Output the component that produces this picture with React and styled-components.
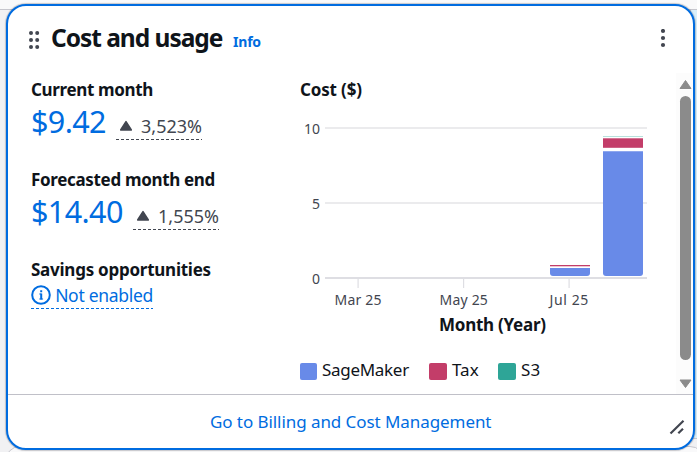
import React from "react";
import styled, { createGlobalStyle } from "styled-components";

const Global = createGlobalStyle`
  *, *::before, *::after { box-sizing: border-box; }
  body {
    margin: 0;
    background: #f3f3f5;
    font-family: "Noto Sans", "Open Sans", sans-serif;
    color: #0f141a;
    overflow: hidden;
  }
`;

const Page = styled.div`
  height: 452px;
  padding: 4px 2px 3px 6px;
  position: relative;
  overflow: hidden;
  background: linear-gradient(#f9f9fa 0 9px, #c6c6cd 9px 10px, #f1f1f3 10px);
`;

const Neighbor = styled.div`
  position: absolute;
  border: 1px solid #c6c6cd;
  left: ${(p) => p.$x}px;
  top: ${(p) => p.$y}px;
  width: ${(p) => p.$w}px;
  height: ${(p) => p.$h}px;
  border-radius: ${(p) => p.$r || 0}px;
  background: ${(p) => p.$bg};
`;

const Card = styled.section`
  position: relative;
  height: 446px;
  border: 2px solid #006ce0;
  border-radius: 20px;
  background: #fff;
  box-shadow: 0 0 1px 1px rgba(0, 7, 22, 0.2);
  display: flex;
  flex-direction: column;
  overflow: hidden;
`;

const Header = styled.header`
  height: 67px;
  flex: none;
  display: flex;
  align-items: flex-start;
  padding: 0 25px 0 20px;
`;

const HeaderIcon = styled.svg`
  display: block;
  flex: none;
  margin-top: 23px;
  fill: #424650;
`;

const Label = styled.span`
  display: block;
  white-space: nowrap;
  font-size: ${(p) => p.$size || 17}px;
  line-height: ${(p) => p.$lh || 20}px;
  font-weight: ${(p) => (p.$bold ? 700 : 400)};
  letter-spacing: ${(p) => p.$ls || 0}px;
  color: ${(p) => p.$color || "#0f141a"};
`;

const Title = styled.h2`
  width: 170px;
  margin: 15px 0 0 11px;
  font-size: 24.5px;
  line-height: 34px;
  letter-spacing: -1.03px;
  white-space: nowrap;
`;

const Info = styled.a`
  margin: 26px auto 0 12px;
  font-size: 14px;
  line-height: 20px;
  font-weight: 700;
  color: #006ce0;
  letter-spacing: -0.2px;
`;

const Body = styled.div`
  height: 321px;
  flex: none;
  display: grid;
  grid-template-columns: 269px 1fr 17px;
  padding-left: 23px;
`;

const Metrics = styled.div`
  padding-top: 5px;
`;

const Metric = styled.div`
  height: 90px;
`;

const ValueRow = styled.div`
  display: flex;
  align-items: flex-start;
`;

const Value = styled.div`
  width: ${(p) => p.$w}px;
`;

const Trend = styled.span`
  display: flex;
  align-items: center;
  justify-content: space-between;
  width: 86px;
  height: 24px;
  margin-top: 14px;
  padding: 0 0 5px 3px;
  background: repeating-linear-gradient(90deg, #424650 0 3px, transparent 3px 5px) left bottom / 100% 1px no-repeat;
`;

const Status = styled.span`
  display: flex;
  align-items: center;
  justify-content: space-between;
  width: 122px;
  height: 25px;
  margin-top: 2px;
  padding-bottom: 4px;
  background: repeating-linear-gradient(90deg, #006ce0 0 3px, transparent 3px 5px) left bottom / 100% 1px no-repeat;
`;

const ChartColumn = styled.div`
  padding-top: 5px;
`;

const Plot = styled.svg`
  display: block;
  margin-top: 15px;
  overflow: visible;
`;

const AxisText = styled.text`
  font-size: 14px;
  letter-spacing: ${(p) => p.$ls || 0}px;
  fill: #424650;
`;

const AxisTitle = styled.div`
  padding: 0 0 0 139px;
`;

const Legend = styled.div`
  display: flex;
  margin-top: 23px;
`;

const LegendItem = styled.div`
  display: flex;
  gap: 5px;
  width: ${(p) => p.$w}px;
`;

const Swatch = styled.span`
  flex: none;
  width: ${(p) => p.$w}px;
  height: 17px;
  margin-top: 3px;
  border-radius: 2px;
  background: ${(p) => p.$c};
`;

const Scrollbar = styled.div`
  background: #fcfcfc;
  display: flex;
  flex-direction: column;
  align-items: center;
  padding: 6px 0 5px 1px;
`;

const Thumb = styled.div`
  width: 11px;
  height: 264px;
  margin: 6px 0 19px;
  border-radius: 6px;
  background: #8b8b8b;
`;

const Footer = styled.footer`
  flex: 1;
  border-top: 1px solid #c0c0c8;
  display: flex;
  justify-content: space-between;
  padding: 15px 8px 0 202px;
`;

const ResizeIcon = styled.svg`
  margin-top: 9px;
`;

const Up = () => (
  <svg width="14" height="12" viewBox="0 0 14 12">
    <path d="M7 1.700 12.300 10H1.700Z" fill="#424650" stroke="#424650" strokeWidth="1.6" strokeLinejoin="round" />
  </svg>
);

const ticks = [
  { x: 58, label: "Mar 25", tx: 34.5, ls: 0.2 },
  { x: 163.5, label: "May 25", tx: 139.5, ls: 0.2 },
  { x: 269, label: "Jul 25", tx: 249.5, ls: 0.6 },
];

const legend = [
  { label: "SageMaker", color: "#688ae8", w: 129, sw: 17, ls: -0.3 },
  { label: "Tax", color: "#c33d69", w: 69, sw: 18, ls: 0 },
  { label: "S3", color: "#2ea597", w: 50, sw: 18, ls: 0.2 },
];

const metrics = [
  { label: "Current month", ls: -0.35, value: "$9.42", w: 85, change: "3,523%" },
  { label: "Forecasted month end", ls: -0.33, value: "$14.40", w: 102, change: "1,555%" },
];

export default function App() {
  return (
    <Page>
      <Global />
      <Neighbor $x={5} $y={446} $w={700} $h={30} $r={16} $bg="#f9f9fa" />
      <Neighbor $x={690} $y={9} $w={20} $h={430} $bg="#d8effb" />
      <Card>
        <Header>
          <HeaderIcon width="12" height="22" viewBox="0 0 12 22">
            {[4, 11, 18].map((y) => (
              <g key={y}>
                <circle cx="3" cy={y} r="2" />
                <circle cx="9.2" cy={y} r="2" />
              </g>
            ))}
          </HeaderIcon>
          <Title>Cost and usage</Title>
          <Info>Info</Info>
          <HeaderIcon width="10" height="22" viewBox="0 0 10 22">
            {[2, 9, 16].map((y) => (
              <circle key={y} cx="5" cy={y} r="2.1" />
            ))}
          </HeaderIcon>
        </Header>
        <Body>
          <Metrics>
            {metrics.map((m) => (
              <Metric key={m.label}>
                <Label $bold $lh={24} $ls={m.ls}>{m.label}</Label>
                <ValueRow>
                  <Value $w={m.w}>
                    <Label $size={30.5} $lh={38} $ls={-0.6} $color="#006ce0">{m.value}</Label>
                  </Value>
                  <Trend>
                    <Up />
                    <Label $size={18} $ls={0} $color="#424650">{m.change}</Label>
                  </Trend>
                </ValueRow>
              </Metric>
            ))}
            <Label $bold $lh={24} $ls={-0.25}>Savings opportunities</Label>
            <Status>
              <svg width="20" height="20" viewBox="0 0 20 20" fill="none" stroke="#006ce0" strokeWidth="2">
                <circle cx="10" cy="10" r="8.8" />
                <path d="M10.200 8.500v6M10.200 5.200v2" />
                <path d="M8.300 9h2M8.300 14h3.800" strokeWidth="1" />
              </svg>
              <Label $size={17.5} $ls={-0.3} $color="#006ce0">Not enabled</Label>
            </Status>
          </Metrics>
          <ChartColumn>
            <Label $bold $lh={24} $ls={-0.15}>Cost ($)</Label>
            <Plot width="350" height="196" viewBox="0 117 350 196">
              <g fill="#ebebed">
                <rect x="25" y="127" width="322" height="2" />
                <rect x="25" y="202" width="322" height="2" />
              </g>
              <rect x="25" y="277" width="322" height="2" fill="#dedee3" />
              <AxisText x="20" y="134" textAnchor="end">10</AxisText>
              <AxisText x="20" y="209" textAnchor="end">5</AxisText>
              <AxisText x="20" y="284" textAnchor="end">0</AxisText>
              {ticks.map((t) => (
                <g key={t.label}>
                  <rect x={t.x - 0.5} y="279" width="1.2" height="9" fill="#dedee3" />
                  <AxisText x={t.tx} y="305" $ls={t.ls}>{t.label}</AxisText>
                </g>
              ))}
              <rect x="250" y="265" width="40" height="1.3" fill="#c33d69" />
              <path d="M250 268h40v5a3 3 0 0 1-3 3h-34a3 3 0 0 1-3-3z" fill="#688ae8" />
              <rect x="303" y="135" width="40" height="16" fill="#fff" />
              <rect x="303" y="136" width="40" height="1" fill="#b8e1dc" />
              <rect x="303" y="138.3" width="40" height="9.5" fill="#c33d69" />
              <path d="M303 151.300h40v121.700a3 3 0 0 1-3 3h-34a3 3 0 0 1-3-3z" fill="#688ae8" />
            </Plot>
            <AxisTitle>
              <Label $bold $lh={24} $ls={-0.25}>Month (Year)</Label>
            </AxisTitle>
            <Legend>
              {legend.map((l) => (
                <LegendItem key={l.label} $w={l.w}>
                  <Swatch $w={l.sw} $c={l.color} />
                  <Label $ls={l.ls}>{l.label}</Label>
                </LegendItem>
              ))}
            </Legend>
          </ChartColumn>
          <Scrollbar>
            <svg width="13" height="11" viewBox="0 0 13 11">
              <path d="M6.500 1.500 12 9.500H1Z" fill="#8b8b8b" stroke="#8b8b8b" strokeLinejoin="round" />
            </svg>
            <Thumb />
            <svg width="13" height="10" viewBox="0 0 13 10">
              <path d="M6.500 8.500 12 1H1Z" fill="#8b8b8b" stroke="#8b8b8b" strokeLinejoin="round" />
            </svg>
          </Scrollbar>
        </Body>
        <Footer>
          <Label $lh={24} $ls={-0.07} $color="#006ce0">Go to Billing and Cost Management</Label>
          <ResizeIcon width="16" height="16" viewBox="0 0 16 16" stroke="#424650" strokeWidth="2.2">
            <path d="M1.500 14.500 14.500 1.800M9.300 14.300 14 9.700" />
          </ResizeIcon>
        </Footer>
      </Card>
    </Page>
  );
}
